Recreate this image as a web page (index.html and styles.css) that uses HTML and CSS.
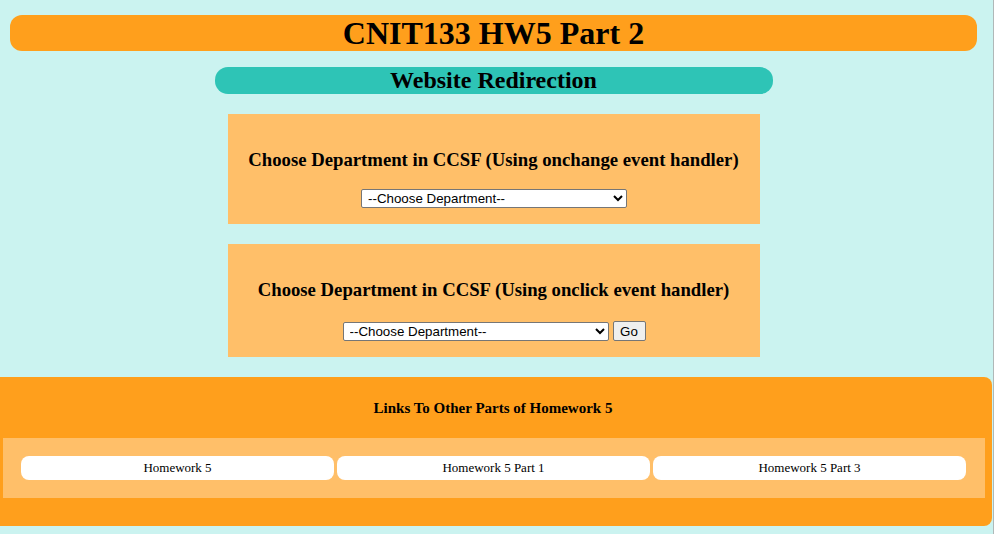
FILE: index.html
```html
<!DOCTYPE html>
<html lang="en">
<head>
<meta charset="utf-8">
<title>CNIT133 HW5 Part 2</title>
<link rel="stylesheet" href="styles.css">
</head>
<body>
  <header class="page-header">
    <h1 class="title">CNIT133 HW5 Part 2</h1>
  </header>
  <div class="subtitle-wrap">
    <h2 class="subtitle">Website Redirection</h2>
  </div>
  <main class="content">
    <section class="card card-change">
      <h3 class="card-title">Choose Department in CCSF (Using onchange event handler)</h3>
      <div class="controls">
        <select class="dept">
          <option>--Choose Department--</option>
          <option>Computer Networking &amp; Information Technology</option>
          <option>Computer Science</option>
        </select>
      </div>
    </section>
    <section class="card card-click">
      <h3 class="card-title">Choose Department in CCSF (Using onclick event handler)</h3>
      <div class="controls">
        <select class="dept">
          <option>--Choose Department--</option>
          <option>Computer Networking &amp; Information Technology</option>
          <option>Computer Science</option>
        </select>
        <button class="go" type="button">Go</button>
      </div>
    </section>
  </main>
  <footer class="footer">
    <h4 class="footer-title">Links To Other Parts of Homework 5</h4>
    <nav class="links">
      <a class="link" href="#">Homework 5</a>
      <a class="link" href="#">Homework 5 Part 1</a>
      <a class="link" href="#">Homework 5 Part 3</a>
    </nav>
  </footer>
</body>
</html>
```
FILE: styles.css
```css
html, body {
  margin: 0;
  padding: 0;
}
body {
  background: #cbf3f0;
  font-family: "Liberation Serif", "Times New Roman", serif;
  color: #000;
  padding-top: 15px;
  padding-bottom: 8px;
  border-right: 1px solid #b0b8b8;
  min-height: 511px;
}
.page-header {
  margin: 0 16px 0 10px;
  height: 36px;
  background: #ff9f1c;
  border-radius: 12px;
  display: flex;
  align-items: center;
  justify-content: center;
}
.title {
  margin: 0;
  font-size: 32px;
  font-weight: bold;
  line-height: 36px;
}
.subtitle-wrap {
  display: flex;
  justify-content: center;
  margin-top: 16px;
  padding-right: 6px;
}
.subtitle {
  margin: 0;
  width: 558px;
  height: 27px;
  background: #2ec4b6;
  border-radius: 13px;
  font-size: 24px;
  line-height: 27px;
  text-align: center;
}
.content {
  display: flex;
  flex-direction: column;
  align-items: center;
  gap: 20px;
  margin-top: 20px;
  padding-right: 6px;
}
.card {
  width: 532px;
  background: #ffbf69;
  display: flex;
  flex-direction: column;
  align-items: center;
  box-sizing: border-box;
}
.card-change {
  height: 110px;
  padding-top: 35px;
  gap: 18px;
}
.card-click {
  height: 113px;
  padding-top: 35px;
  gap: 20px;
}
.card-title {
  margin: 0;
  font-size: 18.72px;
  line-height: 22px;
  font-weight: bold;
}
.controls {
  display: flex;
  align-items: center;
  gap: 4px;
}
.dept {
  width: 266px;
  height: 19px;
  font-family: "Liberation Sans", Arial, sans-serif;
  font-size: 13.33px;
  color: #000;
  background: #fff;
  border: 1px solid #767676;
  border-radius: 2px;
  padding: 0 0 0 2px;
  margin: 0 0 0 1px;
}
.go {
  width: 33px;
  height: 20px;
  font-family: "Liberation Sans", Arial, sans-serif;
  font-size: 13.33px;
  color: #000;
  background: #efefef;
  border: 1px solid #767676;
  border-radius: 2px;
  padding: 0;
}
.footer {
  margin-top: 20px;
  margin-right: 1px;
  height: 149px;
  background: #ff9f1c;
  border-radius: 0 8px 8px 0;
  display: flex;
  flex-direction: column;
  box-sizing: border-box;
  padding-top: 23px;
}
.footer-title {
  margin: 0;
  padding-right: 6px;
  text-align: center;
  font-size: 15px;
  line-height: 17px;
  font-weight: bold;
}
.links {
  margin: 21px 7px 0 3px;
  height: 60px;
  box-sizing: border-box;
  background: #ffbf69;
  padding: 18px 19px 18px 18px;
  display: grid;
  grid-template-columns: 1fr 1fr 1fr;
  gap: 3px;
}
.link {
  display: flex;
  align-items: center;
  justify-content: center;
  height: 24px;
  background: #fff;
  border-radius: 8px;
  color: #000;
  text-decoration: none;
  font-size: 13px;
}
```
